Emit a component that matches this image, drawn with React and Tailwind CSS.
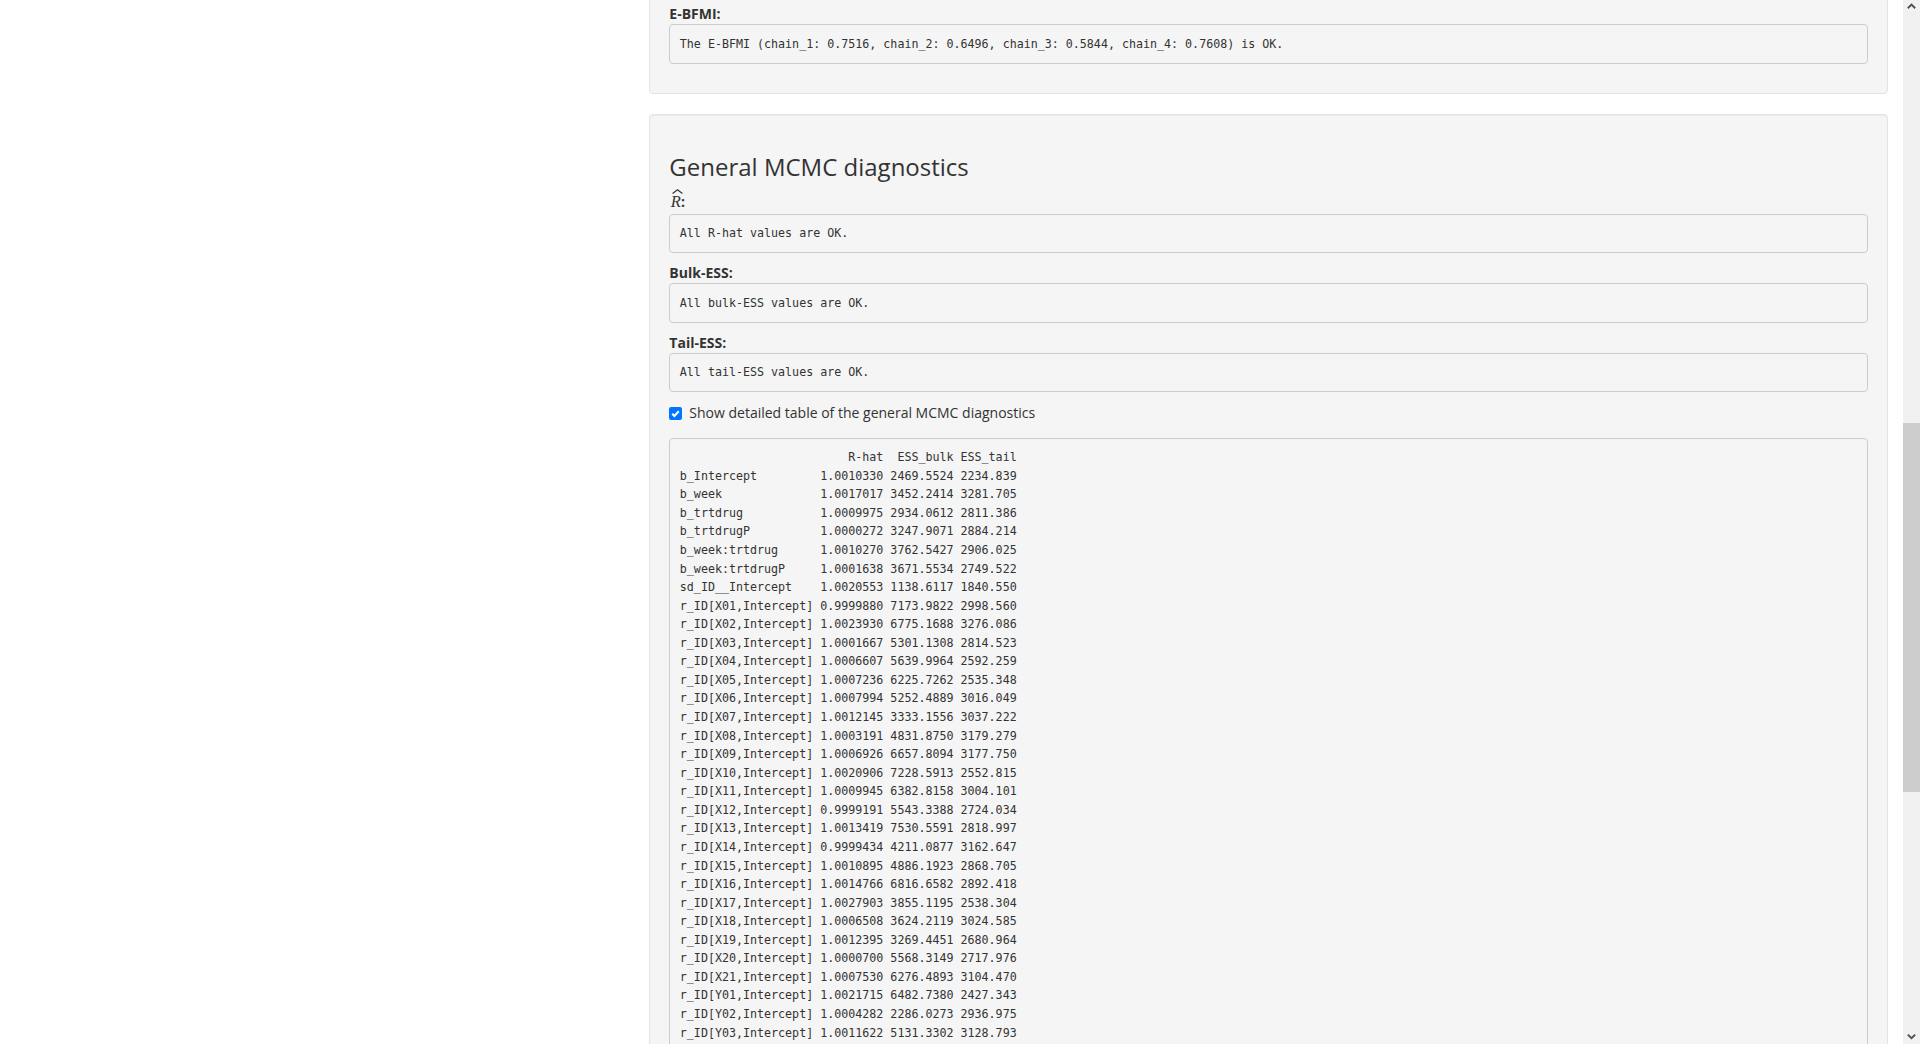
import React from "react";

const ROWS = [
  ["b_Intercept", "1.0010330", "2469.5524", "2234.839"],
  ["b_week", "1.0017017", "3452.2414", "3281.705"],
  ["b_trtdrug", "1.0009975", "2934.0612", "2811.386"],
  ["b_trtdrugP", "1.0000272", "3247.9071", "2884.214"],
  ["b_week:trtdrug", "1.0010270", "3762.5427", "2906.025"],
  ["b_week:trtdrugP", "1.0001638", "3671.5534", "2749.522"],
  ["sd_ID__Intercept", "1.0020553", "1138.6117", "1840.550"],
  ["r_ID[X01,Intercept]", "0.9999880", "7173.9822", "2998.560"],
  ["r_ID[X02,Intercept]", "1.0023930", "6775.1688", "3276.086"],
  ["r_ID[X03,Intercept]", "1.0001667", "5301.1308", "2814.523"],
  ["r_ID[X04,Intercept]", "1.0006607", "5639.9964", "2592.259"],
  ["r_ID[X05,Intercept]", "1.0007236", "6225.7262", "2535.348"],
  ["r_ID[X06,Intercept]", "1.0007994", "5252.4889", "3016.049"],
  ["r_ID[X07,Intercept]", "1.0012145", "3333.1556", "3037.222"],
  ["r_ID[X08,Intercept]", "1.0003191", "4831.8750", "3179.279"],
  ["r_ID[X09,Intercept]", "1.0006926", "6657.8094", "3177.750"],
  ["r_ID[X10,Intercept]", "1.0020906", "7228.5913", "2552.815"],
  ["r_ID[X11,Intercept]", "1.0009945", "6382.8158", "3004.101"],
  ["r_ID[X12,Intercept]", "0.9999191", "5543.3388", "2724.034"],
  ["r_ID[X13,Intercept]", "1.0013419", "7530.5591", "2818.997"],
  ["r_ID[X14,Intercept]", "0.9999434", "4211.0877", "3162.647"],
  ["r_ID[X15,Intercept]", "1.0010895", "4886.1923", "2868.705"],
  ["r_ID[X16,Intercept]", "1.0014766", "6816.6582", "2892.418"],
  ["r_ID[X17,Intercept]", "1.0027903", "3855.1195", "2538.304"],
  ["r_ID[X18,Intercept]", "1.0006508", "3624.2119", "3024.585"],
  ["r_ID[X19,Intercept]", "1.0012395", "3269.4451", "2680.964"],
  ["r_ID[X20,Intercept]", "1.0000700", "5568.3149", "2717.976"],
  ["r_ID[X21,Intercept]", "1.0007530", "6276.4893", "3104.470"],
  ["r_ID[Y01,Intercept]", "1.0021715", "6482.7380", "2427.343"],
  ["r_ID[Y02,Intercept]", "1.0004282", "2286.0273", "2936.975"],
  ["r_ID[Y03,Intercept]", "1.0011622", "5131.3302", "3128.793"],
];

// print like R's data.frame output
const tableText = [
  " ".repeat(20) + "    R-hat" + "  ESS_bulk" + " ESS_tail",
  ...ROWS.map(([n, a, b, c]) => n.padEnd(19) + " " + a + " " + b + " " + c),
].join("\n");

function Pre({ children, className = "" }) {
  return (
    <pre
      className={`m-0 rounded-[4px] border border-[#ccc] bg-[#f5f5f5] p-[9.5px] font-['DejaVu_Sans_Mono',monospace] text-[11.66px] leading-[18.57px] text-[#333] whitespace-pre ${className}`}
    >
      {children}
    </pre>
  );
}

function Label({ children }) {
  return (
    <div className="h-[20px] text-[14px] leading-[20px] font-bold text-[#333]">
      {children}
    </div>
  );
}

function Well({ children, className = "" }) {
  return (
    <div
      className={`flex flex-col rounded-[4px] border border-[#e3e3e3] bg-[#f5f5f5] p-[19px] shadow-[inset_0_1px_1px_rgba(0,0,0,0.05)] ${className}`}
    >
      {children}
    </div>
  );
}

function Scrollbar() {
  return (
    <div className="flex w-[17px] shrink-0 flex-col bg-[#f1f1f1]">
      <div className="h-[17px]">
        <svg width="17" height="17" viewBox="0 0 17 17">
          <polyline points="4.8,8.2 8.5,4.6 12.2,8.2" fill="none" stroke="#505050" strokeWidth="1.9" />
        </svg>
      </div>
      <div className="flex-1">
        <div className="mt-[406px] h-[369px] bg-[#cdcdcd]" />
      </div>
      <div className="h-[17px]">
        <svg width="17" height="17" viewBox="0 0 17 17">
          <polyline points="4.8,7.6 8.5,11.2 12.2,7.6" fill="none" stroke="#505050" strokeWidth="1.9" />
        </svg>
      </div>
    </div>
  );
}

export default function App() {
  return (
    <div className="flex h-[1044px] overflow-hidden bg-white font-['Open_Sans',sans-serif] text-[#333]">
      <div className="flex-1 overflow-hidden">
        <div className="grid grid-cols-[634.33px_1fr] pr-[15px]">
          {/* sidebar column (scrolled out of view) */}
          <div />

          <div className="flex flex-col gap-[20px] pl-[15px]">
            {/* HMC-specific block, scrolled partly off the top */}
            <Well className="-mt-[16px]">
              <Label>E-BFMI:</Label>
              <Pre className="mb-[10px]">
                The E-BFMI (chain_1: 0.7516, chain_2: 0.6496, chain_3: 0.5844, chain_4: 0.7608) is OK.
              </Pre>
            </Well>

            <Well>
              <h3 className="mt-[20px] mb-[10px] text-[24px] leading-[26.4px] font-normal text-[#333]">
                General MCMC diagnostics
              </h3>

              <div className="h-[23.6px] pt-[2.3px] text-[14px] leading-[20px] font-bold">
                <span className="relative ml-[1.5px] font-['Liberation_Serif',serif] text-[16.5px] font-normal italic">
                  R
                  <svg
                    className="absolute -top-[3.5px] left-[1.5px]"
                    width="11"
                    height="5"
                    viewBox="0 0 11 5"
                  >
                    <polyline points="0.6,4.4 5.5,0.8 10.4,4.4" fill="none" stroke="#333" strokeWidth="1.2" />
                  </svg>
                </span>
                <span>:</span>
              </div>
              <Pre className="mb-[10px]">All R-hat values are OK.</Pre>

              <Label>Bulk-ESS:</Label>
              <Pre className="mb-[10px]">All bulk-ESS values are OK.</Pre>

              <Label>Tail-ESS:</Label>
              <Pre className="mb-[11px]">All tail-ESS values are OK.</Pre>

              <div className="flex h-[20px] items-center gap-[7px] text-[14px] leading-[20px]">
                <div className="flex h-[13px] w-[13px] items-center justify-center rounded-[2px] bg-[#0075ff]">
                  <svg width="13" height="13" viewBox="0 0 13 13">
                    <polyline points="3.2,6.8 5.4,9 9.8,4.2" fill="none" stroke="#fff" strokeWidth="2" />
                  </svg>
                </div>
                <span>Show detailed table of the general MCMC diagnostics</span>
              </div>

              <Pre className="mt-[14.4px]">{tableText}</Pre>
            </Well>
          </div>
        </div>
      </div>
      <Scrollbar />
    </div>
  );
}
